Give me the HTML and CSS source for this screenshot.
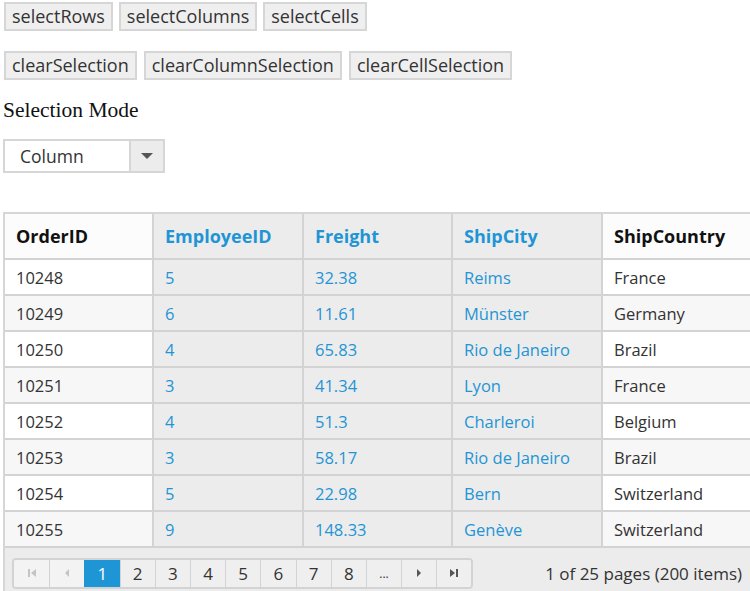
FILE: index.html
```html
<!DOCTYPE html>
<html>
<head>
<meta charset="utf-8">
<link rel="stylesheet" href="styles.css">
</head>
<body>
<div class="page">
  <div class="btn-row first">
    <button class="btn">selectRows</button>
    <button class="btn">selectColumns</button>
    <button class="btn">selectCells</button>
  </div>
  <div class="btn-row second">
    <button class="btn">clearSelection</button>
    <button class="btn">clearColumnSelection</button>
    <button class="btn">clearCellSelection</button>
  </div>
  <div class="mode-label">Selection Mode</div>
  <div class="dropdown">
    <span class="dd-value">Column</span>
    <span class="dd-arrow"><svg width="12" height="6" viewBox="0 0 12 6"><path d="M0 0 L12 0 L6 6 Z" fill="#555"/></svg></span>
  </div>

  <div class="grid">
    <table>
      <colgroup>
        <col class="c1"><col class="c2"><col class="c3"><col class="c4"><col class="c5">
      </colgroup>
      <thead>
        <tr>
          <th>OrderID</th>
          <th class="sel">EmployeeID</th>
          <th class="sel">Freight</th>
          <th class="sel">ShipCity</th>
          <th>ShipCountry</th>
        </tr>
      </thead>
      <tbody>
        <tr><td>10248</td><td class="sel">5</td><td class="sel">32.38</td><td class="sel">Reims</td><td>France</td></tr>
        <tr class="alt"><td>10249</td><td class="sel">6</td><td class="sel">11.61</td><td class="sel">Münster</td><td>Germany</td></tr>
        <tr><td>10250</td><td class="sel">4</td><td class="sel">65.83</td><td class="sel">Rio de Janeiro</td><td>Brazil</td></tr>
        <tr class="alt"><td>10251</td><td class="sel">3</td><td class="sel">41.34</td><td class="sel">Lyon</td><td>France</td></tr>
        <tr><td>10252</td><td class="sel">4</td><td class="sel">51.3</td><td class="sel">Charleroi</td><td>Belgium</td></tr>
        <tr class="alt"><td>10253</td><td class="sel">3</td><td class="sel">58.17</td><td class="sel">Rio de Janeiro</td><td>Brazil</td></tr>
        <tr><td>10254</td><td class="sel">5</td><td class="sel">22.98</td><td class="sel">Bern</td><td>Switzerland</td></tr>
        <tr class="alt"><td>10255</td><td class="sel">9</td><td class="sel">148.33</td><td class="sel">Genève</td><td>Switzerland</td></tr>
      </tbody>
    </table>
    <div class="pager">
      <div class="pages">
        <span class="pg nav dis"><svg width="10" height="10" viewBox="0 0 10 10"><rect x="1" y="1" width="2" height="8" fill="#c4c4c4"/><path d="M9 1 L4 5 L9 9 Z" fill="#c4c4c4"/></svg></span>
        <span class="pg nav dis"><svg width="6" height="10" viewBox="0 0 6 10"><path d="M5 1 L1 5 L5 9 Z" fill="#c4c4c4"/></svg></span>
        <span class="pg active">1</span>
        <span class="pg">2</span>
        <span class="pg">3</span>
        <span class="pg">4</span>
        <span class="pg">5</span>
        <span class="pg">6</span>
        <span class="pg">7</span>
        <span class="pg">8</span>
        <span class="pg dots">...</span>
        <span class="pg nav"><svg width="6" height="10" viewBox="0 0 6 10"><path d="M1 1 L5 5 L1 9 Z" fill="#555"/></svg></span>
        <span class="pg nav last"><svg width="10" height="10" viewBox="0 0 10 10"><path d="M1 1 L6 5 L1 9 Z" fill="#555"/><rect x="7" y="1" width="2" height="8" fill="#555"/></svg></span>
      </div>
      <div class="info">1 of 25 pages (200 items)</div>
    </div>
  </div>
</div>
</body>
</html>
```

FILE: styles.css
```css
html, body {
  margin: 0;
  padding: 0;
  overflow: hidden;
  background: #fff;
}
.page {
  padding: 2px 0 0 3px;
  font-family: "Open Sans", "Noto Sans", sans-serif;
  color: #333;
}
.btn-row {
  display: flex;
  gap: 6px;
  padding-left: 1px;
}
.btn-row.second {
  margin-top: 20px;
  gap: 7px;
}
.btn {
  height: 29px;
  padding: 0 6px;
  font-family: "Open Sans", "Noto Sans", sans-serif;
  font-size: 18px;
  color: #333;
  background: #efefef;
  border: 2px solid #d6d6d6;
  border-radius: 0;
  line-height: 25px;
}
.mode-label {
  font-family: "Liberation Serif", serif;
  font-size: 21.5px;
  color: #111;
  margin-top: 18px;
  height: 24px;
  line-height: 24px;
}
.dropdown {
  margin-top: 17px;
  width: 162px;
  height: 34px;
  display: flex;
  box-sizing: border-box;
  border: 2px solid #d6d6d6;
  background: #fff;
}
.dd-value {
  flex: 1;
  padding-left: 15px;
  font-size: 17.5px;
  line-height: 30px;
  color: #333;
}
.dd-arrow {
  width: 32px;
  background: #ececec;
  border-left: 2px solid #d6d6d6;
  display: flex;
  align-items: center;
  justify-content: center;
}
.grid {
  margin-top: 39px;
  width: 762px;
  border: 2px solid #d6d6d6;
  border-right: none;
  background: #ececec;
}
table {
  border-collapse: collapse;
  table-layout: fixed;
  width: 760px;
}
col.c1 { width: 148px; }
col.c2 { width: 150px; }
col.c3 { width: 149px; }
col.c4 { width: 150px; }
col.c5 { width: 163px; }
th, td {
  text-align: left;
  padding: 0 0 0 11px;
  border-right: 2px solid #d3d3d3;
  border-bottom: 2px solid #d3d3d3;
  white-space: nowrap;
  overflow: hidden;
}
th {
  height: 44px;
  font-size: 18px;
  font-weight: 700;
  color: #111;
  background: #fcfcfc;
}
td {
  height: 34px;
  font-size: 16.5px;
  color: #333;
  background: #fff;
}
tr.alt td {
  background: #f7f7f7;
}
th.sel, td.sel, tr.alt td.sel {
  background: #ececec;
  color: #1f95d5;
}
.pager {
  height: 48px;
  display: flex;
  align-items: center;
  justify-content: space-between;
  padding: 0 10px 0 7px;
  background: #ececec;
  width: 747px;
  box-sizing: border-box;
}
.pages {
  display: flex;
  border: 2px solid #d3d3d3;
  border-radius: 4px;
  overflow: hidden;
  background: #f3f3f3;
  height: 31px;
  box-sizing: border-box;
  margin-top: 2px;
}
.pg {
  width: 35.2px;
  box-sizing: border-box;
  display: flex;
  align-items: center;
  justify-content: center;
  font-size: 17px;
  color: #333;
  border-left: 1.5px solid #d3d3d3;
  background: #efefef;
}
.pg:first-child {
  border-left: none;
}
.pg.dis {
  background: #f3f3f3;
}
.pg.active {
  background: #1e96d6;
  color: #fff;
  border-left-color: #1e96d6;
}
.pg.dots {
  font-size: 12px;
}
.info {
  font-size: 17px;
  color: #333;
  margin-top: 2px;
}
```
